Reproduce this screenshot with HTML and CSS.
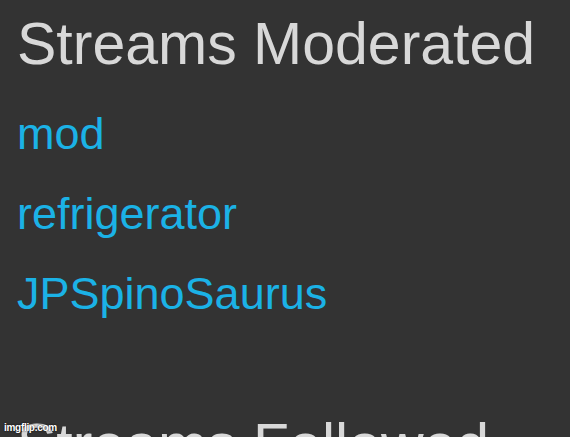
FILE: index.html
```html
<!DOCTYPE html>
<html lang="en">
<head>
    <meta charset="UTF-8">
    <meta name="viewport" content="width=device-width, initial-scale=1.0">
    <title>Streams</title>
    <link rel="stylesheet" href="styles.css">
</head>
<body>
    <div class="profile">
        <h2>Streams Moderated</h2>
        <ul class="streams">
            <li><a href="#">mod</a></li>
            <li><a href="#">refrigerator</a></li>
            <li><a href="#">JPSpinoSaurus</a></li>
        </ul>
        <h2>Streams Followed</h2>
    </div>
    <div class="watermark">imgflip.com</div>
</body>
</html>
```

FILE: styles.css
```css
body{
    margin: 0;
    padding: 0;
    background-color: #333333;
    font-family: "Liberation Sans", Arial, sans-serif;
    overflow: hidden;
    height: 437px;
}
.profile{
    padding: 10px 17px 0;
}
.profile h2{
    margin: 0;
    font-size: 59px;
    font-weight: normal;
    color: #d8d8d8;
}
.streams{
    list-style: none;
    margin: 16px 0 77px;
    padding: 0;
}
.streams li{
    font-size: 45px;
    line-height: 80px;
}
.streams a{
    color: #1bb2e6;
    text-decoration: none;
}
.watermark{
    position: absolute;
    left: 4px;
    bottom: 4px;
    font-size: 10px;
    font-weight: bold;
    letter-spacing: -0.3px;
    color: #ffffff;
    text-shadow: 0 0 2px #000;
}
```
